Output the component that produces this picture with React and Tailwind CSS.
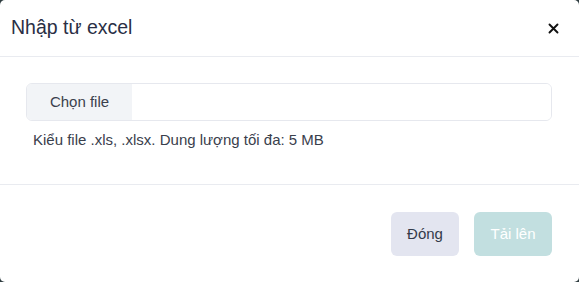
import React from 'react';

const App = () => {
  return (
    <div className="w-[579px] h-[282px] bg-[#2f3d40] font-['Liberation_Sans',Arial,sans-serif]">
      <div className="w-full h-full bg-white rounded-[5px] flex flex-col">
        {/* Header */}
        <div className="h-[57px] flex items-center justify-between pl-[11px] pr-[19px] border-b border-[#e9ebf0]">
          <h1 className="text-[19.5px] text-[#2a2f45] leading-none">Nhập từ excel</h1>
          <button className="text-[#111] w-[14px] h-[14px] flex items-center justify-center">
            <svg width="11" height="11" viewBox="0 0 11 11" fill="none" stroke="currentColor" strokeWidth="1.9" strokeLinecap="round">
              <path d="M1.5 1.5L9.5 9.5M9.5 1.5L1.5 9.5" />
            </svg>
          </button>
        </div>

        {/* Body */}
        <div className="h-[128px] border-b border-[#e9ebf0] pt-[26px] pl-[26px] pr-[27px]">
          <div className="h-[38px] flex border border-[#e6e8ee] rounded-[6px] overflow-hidden">
            <div className="w-[105px] bg-[#f2f4f7] flex items-center justify-center text-[15px] text-[#3a404c]">
              Chọn file
            </div>
            <div className="flex-1 bg-white" />
          </div>
          <p className="mt-[9px] ml-[7px] text-[15px] text-[#3a404c] leading-[20px]">
            Kiểu file .xls, .xlsx. Dung lượng tối đa: 5 MB
          </p>
        </div>

        {/* Footer */}
        <div className="flex-1 flex justify-end items-start gap-[15px] pt-[27px] pr-[27px]">
          <button className="w-[68px] h-[44px] rounded-[6px] bg-[#e3e5f0] text-[15px] text-[#343a4a]">
            Đóng
          </button>
          <button className="w-[78px] h-[44px] rounded-[6px] bg-[#c2dfe0] text-[15px] text-white">
            Tải lên
          </button>
        </div>
      </div>
    </div>
  );
};

export default App;
